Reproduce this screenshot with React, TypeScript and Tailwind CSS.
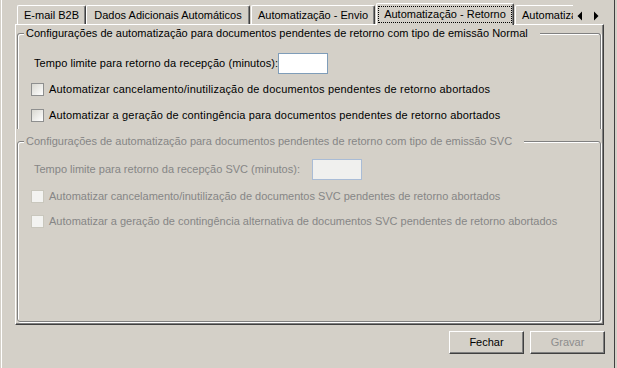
import React from "react";

const font = "font-['Liberation_Sans',Arial,sans-serif] text-[11px] leading-[13px]";

function Check({ disabled }: { disabled?: boolean }) {
  return (
    <span
      className={
        disabled
          ? "w-[13px] h-[13px] shrink-0 border border-[#c9c7bd] bg-[#f3f3f1]"
          : "w-[13px] h-[13px] shrink-0 border border-[#8e8f8f] bg-linear-to-br from-[#d9d8d1] to-white"
      }
    />
  );
}

function Tab({ label, w }: { label: string; w: string }) {
  return (
    <div
      className={`${w} h-[19px] shrink-0 flex items-center justify-center border-l border-t border-r border-l-white border-t-white border-r-[#404040] shadow-[inset_-1px_0_0_#808080] rounded-tl-[2px] rounded-tr-[2px] text-black whitespace-nowrap`}
    >
      {label}
    </div>
  );
}

export default function App() {
  return (
    <div className={`w-[617px] h-[368px] bg-[#d4d0c8] pl-px flex overflow-hidden ${font} text-black`}>
      <div className="w-[614px] h-full border-l border-l-white border-r border-r-[#404040] pl-[13px] pr-[9px] flex flex-col">
        {/* Tab strip */}
        <div className="w-[589px] h-[24px] flex items-end pl-[2px]">
          <Tab label="E-mail B2B" w="w-[69px]" />
          <Tab label="Dados Adicionais Automáticos" w="w-[164px]" />
          <div className="w-[1px] shrink-0" />
          <Tab label="Automatização - Envio" w="w-[124px]" />
          <div className="w-[1px] shrink-0" />
          <div className="relative z-10 w-[138px] h-[22px] -mb-px shrink-0 flex bg-[#d4d0c8] border-l border-t border-r border-l-white border-t-white border-r-[#404040] shadow-[inset_-1px_0_0_#808080] rounded-tl-[2px] rounded-tr-[2px]">
            <div className="flex-1 mx-px mt-[2px] mb-[2px] border border-dotted border-black flex items-center justify-center whitespace-nowrap">
              Automatização - Retorno
            </div>
          </div>
          <div className="w-[1px] shrink-0" />
          <div className="w-[58px] h-[19px] shrink-0 overflow-hidden flex items-center pl-[6px] border-l border-t border-l-white border-t-white rounded-tl-[2px] whitespace-nowrap">
            Automatização
          </div>
          <div className="w-[31px] h-[24px] shrink-0 self-start">
            <svg width="31" height="24" viewBox="0 0 31 24">
              <polygon points="4.5,16 9,11.5 9,20.5" fill="#000" />
              <polygon points="21,11.5 21,20.5 25.5,16" fill="#000" />
            </svg>
          </div>
        </div>

        {/* Tab page */}
        <div className="w-[589px] h-[301px] border-t border-l border-r border-b border-t-white border-l-white border-r-[#404040] border-b-[#404040] shadow-[inset_-1px_-1px_0_#808080] flex flex-col">
          {/* Group 1 */}
          <div className="relative ml-px mt-[8px] w-[584px] h-[96px] border border-b-0 border-[#808080] rounded-t-[3px] shadow-[inset_1px_1px_0_#fff,1px_0_0_#fff] flex flex-col pl-[16px] pt-[19px]">
            <span className="absolute left-[6px] -top-[7px] pl-[2px] pr-[12px] bg-[#d4d0c8] whitespace-nowrap tracking-[0.03px]">
              Configurações de automatização para documentos pendentes de retorno com tipo de emissão Normal
            </span>
            <div className="flex items-center h-[21px]">
              <span className="w-[244px] whitespace-nowrap tracking-[0.08px]">Tempo limite para retorno da recepção (minutos):</span>
              <div className="w-[50px] h-[21px] bg-white border border-[#7f9db9]" />
            </div>
            <div className="flex items-center mt-[9px] -ml-[3px] h-[13px]">
              <Check />
              <span className="ml-[5px] whitespace-nowrap tracking-[0.19px]">
                Automatizar cancelamento/inutilização de documentos pendentes de retorno abortados
              </span>
            </div>
            <div className="flex items-center mt-[13px] -ml-[3px] h-[13px]">
              <Check />
              <span className="ml-[5px] whitespace-nowrap tracking-[0.155px]">
                Automatizar a geração de contingência para documentos pendentes de retorno abortados
              </span>
            </div>
          </div>

          {/* Group 2 (disabled) */}
          <div className="relative ml-px mt-[12px] w-[584px] h-[181px] border border-[#808080] rounded-[3px] shadow-[inset_1px_1px_0_#fff,1px_1px_0_#fff] flex flex-col pl-[16px] pt-[17px] text-[#868686]">
            <span className="absolute left-[6px] -top-[7px] pl-[2px] pr-[12px] bg-[#d4d0c8] whitespace-nowrap">
              Configurações de automatização para documentos pendentes de retorno com tipo de emissão SVC
            </span>
            <div className="flex items-center h-[21px]">
              <span className="w-[278px] whitespace-nowrap">Tempo limite para retorno da recepção SVC (minutos):</span>
              <div className="w-[50px] h-[21px] bg-[#f0f0ee] border border-[#a9bcd6]" />
            </div>
            <div className="flex items-center mt-[10px] -ml-[3px] h-[13px]">
              <Check disabled />
              <span className="ml-[5px] whitespace-nowrap">
                Automatizar cancelamento/inutilização de documentos SVC pendentes de retorno abortados
              </span>
            </div>
            <div className="flex items-center mt-[12px] -ml-[3px] h-[13px]">
              <Check disabled />
              <span className="ml-[5px] whitespace-nowrap">
                Automatizar a geração de contingência alternativa de documentos SVC pendentes de retorno abortados
              </span>
            </div>
          </div>
        </div>

        {/* Buttons */}
        <div className="mt-[6px] flex justify-end gap-[6px]">
          <button className="w-[75px] h-[23px] border border-t-white border-l-white border-r-[#404040] border-b-[#404040] shadow-[inset_-1px_-1px_0_#808080] bg-[#d4d0c8] text-black flex items-center justify-center">
            Fechar
          </button>
          <button className="w-[75px] h-[23px] border border-t-white border-l-white border-r-[#404040] border-b-[#404040] shadow-[inset_-1px_-1px_0_#808080] bg-[#d4d0c8] text-[#8d8d8d] flex items-center justify-center">
            Gravar
          </button>
        </div>
      </div>
    </div>
  );
}
